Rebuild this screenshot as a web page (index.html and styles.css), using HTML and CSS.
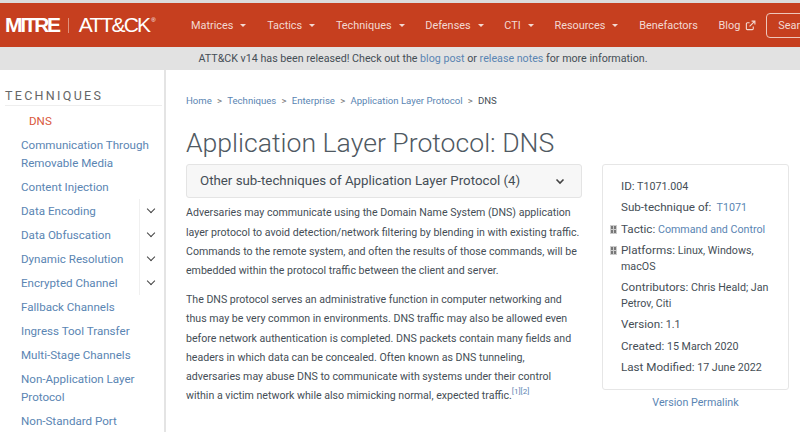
FILE: index.html
```html
<!DOCTYPE html>
<html lang="en">
  <head>
    <meta charset="UTF-8" />
    <title>Application Layer Protocol: DNS</title>
    <link rel="stylesheet" href="styles.css">
  </head>
  <body>
    <header class="navbar">
      <div class="logo"><span class="logo-mitre">MITRE</span><span class="logo-bar"></span><span class="logo-attack">ATT&amp;CK<sup>®</sup></span></div>
      <nav class="nav-links">
        <a class="nav-link caret">Matrices</a>
        <a class="nav-link caret">Tactics</a>
        <a class="nav-link caret">Techniques</a>
        <a class="nav-link caret">Defenses</a>
        <a class="nav-link caret">CTI</a>
        <a class="nav-link caret">Resources</a>
        <a class="nav-link">Benefactors</a>
        <a class="nav-link">Blog
          <svg class="ext-icon" viewBox="0 0 12 12" fill="none" stroke="currentColor" stroke-width="1.2">
            <path d="M9 7v2.500a1 1 0 0 1-1 1H2.500a1 1 0 0 1-1-1V4a1 1 0 0 1 1-1H5" />
            <path d="M5 7l5.500-5.500M7.200 1.200h3.600v3.600" />
          </svg>
        </a>
      </nav>
      <button class="search-btn">Search</button>
    </header>
    <div class="banner">
      ATT&amp;CK v14 has been released! Check out the <a>blog post</a> or <a>release notes</a> for more information.
    </div>
    <div class="page">
      <aside class="sidebar">
        <h5 class="side-title">TECHNIQUES</h5>
        <ul class="side-list">
          <li class="side-item active">DNS</li>
          <li class="side-item">Communication Through Removable Media</li>
          <li class="side-item">Content Injection</li>
          <li class="side-item expand">Data Encoding</li>
          <li class="side-item expand">Data Obfuscation</li>
          <li class="side-item expand">Dynamic Resolution</li>
          <li class="side-item expand">Encrypted Channel</li>
          <li class="side-item">Fallback Channels</li>
          <li class="side-item">Ingress Tool Transfer</li>
          <li class="side-item">Multi-Stage Channels</li>
          <li class="side-item">Non-Application Layer Protocol</li>
          <li class="side-item">Non-Standard Port</li>
        </ul>
      </aside>
      <main class="content">
        <ol class="crumbs">
          <li><a>Home</a></li>
          <li><a>Techniques</a></li>
          <li><a>Enterprise</a></li>
          <li><a>Application Layer Protocol</a></li>
          <li>DNS</li>
        </ol>
        <h1 class="title">Application Layer Protocol: DNS</h1>
        <div class="columns">
          <div class="description">
            <div class="subs-card">
              <span>Other sub-techniques of Application Layer Protocol (4)</span>
              <svg class="chev" viewBox="0 0 12 12" fill="none" stroke="currentColor" stroke-width="1.6"><path d="M2.500 4.500L6 8l3.500-3.500" /></svg>
            </div>
            <p>Adversaries may communicate using the Domain Name System (DNS) application layer protocol to avoid detection/network filtering by blending in with existing traffic. Commands to the remote system, and often the results of those commands, will be embedded within the protocol traffic between the client and server.</p>
            <p>The DNS protocol serves an administrative function in computer networking and thus may be very common in environments. DNS traffic may also be allowed even before network authentication is completed. DNS packets contain many fields and headers in which data can be concealed. Often known as DNS tunneling, adversaries may abuse DNS to communicate with systems under their control within a victim network while also mimicking normal, expected traffic.<sup><a>[1]</a><a>[2]</a></sup></p>
          </div>
          <div class="side-info">
            <div class="info-card">
              <div class="info-row"><b>ID:</b> T1071.004</div>
              <div class="info-row"><b>Sub-technique of:</b>&nbsp; <a>T1071</a></div>
              <div class="info-row"><span class="tofu"></span><b>Tactic:</b> <a>Command and Control</a></div>
              <div class="info-row"><span class="tofu"></span><b>Platforms:</b> Linux, Windows, macOS</div>
              <div class="info-row"><b>Contributors:</b> Chris Heald; Jan Petrov, Citi</div>
              <div class="info-row"><b>Version:</b> 1.1</div>
              <div class="info-row"><b>Created:</b> 15 March 2020</div>
              <div class="info-row"><b>Last Modified:</b> 17 June 2022</div>
            </div>
            <a class="permalink">Version Permalink</a>
          </div>
        </div>
      </main>
    </div>
  </body>
</html>
```

FILE: styles.css
```css
:root {
  --red: #c63f1f;
  --link: #5a85b3;
  --text: #454e56;
}
*,
*::before,
*::after {
  box-sizing: border-box;
}
html,
body {
  height: 432px;
  overflow: hidden;
}
body {
  margin: 0;
  font-family: Roboto, "Liberation Sans", sans-serif;
  color: var(--text);
  background: #fff;
}
a {
  color: var(--link);
}

.navbar {
  display: flex;
  align-items: center;
  height: 47px;
  padding-left: 5px;
  border-top: 3px solid #dcdcdc;
  background: var(--red);
  overflow: hidden;
  white-space: nowrap;
}
.logo {
  display: flex;
  align-items: center;
  flex: none;
  width: 186px;
  font-family: "Liberation Sans", sans-serif;
  font-size: 21px;
  color: #fff;
}
.logo-mitre {
  font-weight: bold;
  letter-spacing: -2.300px;
}
.logo-bar {
  width: 1px;
  height: 15px;
  margin: 0 10px 0 9px;
  background: #e0917d;
}
.logo-attack {
  letter-spacing: -1.800px;
}
.logo-attack sup {
  margin-left: 2px;
  font-size: 6px;
  line-height: 0;
  vertical-align: 10px;
}
.nav-links {
  display: flex;
  flex: none;
  gap: 20.700px;
  font-size: 10.900px;
}
.nav-link {
  display: flex;
  align-items: center;
  color: #f3d9d2;
}
.caret::after {
  content: "";
  margin-left: 7px;
  border-top: 3px solid currentColor;
  border-left: 3px solid transparent;
  border-right: 3px solid transparent;
}
.ext-icon {
  width: 11px;
  height: 11px;
  margin-left: 5px;
}
.search-btn {
  flex: none;
  width: 70px;
  height: 25px;
  margin-left: 10px;
  padding: 0 0 0 11px;
  border: 1px solid #eec6bb;
  border-radius: 4px;
  background: transparent;
  color: #f3d9d2;
  font: 10.900px Roboto, sans-serif;
  text-align: left;
}

.banner {
  height: 23px;
  padding-left: 46px;
  line-height: 23px;
  background: #e2e2e2;
  text-align: center;
  font-size: 10.700px;
}

.page {
  display: flex;
  height: 362px;
}
.sidebar {
  flex: none;
  width: 166px;
  padding: 0 2px 0 5px;
  border-right: 2px solid #e4e4e4;
}
.side-title {
  margin: 18px 0 0;
  padding-bottom: 2px;
  border-bottom: 1px solid #eee;
  font-size: 12.500px;
  font-weight: 400;
  letter-spacing: 2.300px;
  line-height: 15px;
  color: #666;
}
.side-list {
  list-style: none;
  margin: 3px 0 0;
  padding: 0;
}
.side-item {
  position: relative;
  padding: 3px 8px 3px 16px;
  font-size: 11.600px;
  line-height: 18px;
  color: var(--link);
}
.side-item.active {
  padding-left: 24px;
  color: #d9583c;
}
.side-item.expand::after {
  content: "";
  position: absolute;
  right: 8px;
  top: 7px;
  width: 6px;
  height: 6px;
  border-right: 1.500px solid #444;
  border-bottom: 1.500px solid #444;
  transform: rotate(45deg);
}
.side-item.expand::before {
  content: "";
  position: absolute;
  right: 22px;
  top: 0;
  bottom: 0;
  border-left: 1px solid #f0f0f0;
}

.content {
  flex: 1;
  padding: 0 11px 0 20px;
}
.crumbs {
  display: flex;
  list-style: none;
  margin: 24px 0 0;
  padding: 0;
  font-size: 9.600px;
  line-height: 14px;
}
.crumbs li + li::before {
  content: ">";
  padding: 0 5.200px;
  color: #777;
}
.title {
  margin: 19px 0 0;
  font-size: 26.600px;
  font-weight: 300;
  line-height: 32px;
  color: #4f5962;
}
.columns {
  display: flex;
  align-items: flex-start;
  gap: 20px;
  margin-top: 5px;
}
.description {
  flex: none;
  width: 396px;
  font-size: 10.600px;
  line-height: 19.200px;
}
.description p {
  width: 395px;
  margin: 0 0 10px;
}
.description sup {
  font-size: 8px;
  line-height: 0;
}
.subs-card {
  display: flex;
  align-items: center;
  justify-content: space-between;
  height: 34px;
  margin-bottom: 5.400px;
  padding: 0 15px 0 13px;
  border: 1px solid #e4e4e4;
  border-radius: 3px;
  background: #f7f7f7;
  font-size: 13.300px;
}
.chev {
  width: 12px;
  height: 12px;
  color: #444;
}

.side-info {
  flex: none;
  width: 187px;
  text-align: center;
}
.info-card {
  padding: 13px 12px 9px 18px;
  border: 1px solid #e6e6e6;
  border-radius: 3px;
  text-align: left;
  font-size: 10.700px;
  line-height: 16px;
}
.info-row {
  position: relative;
  margin-bottom: 4.300px;
}
.info-row b {
  font-size: 11.650px;
  font-weight: 400;
}
.tofu {
  position: absolute;
  left: -11px;
  top: 4px;
  width: 7px;
  height: 9px;
  background:
    linear-gradient(#777, #777) 1px 1px / 2px 3px no-repeat,
    linear-gradient(#777, #777) 4px 1px / 2px 3px no-repeat,
    linear-gradient(#777, #777) 1px 5px / 2px 3px no-repeat,
    linear-gradient(#777, #777) 4px 5px / 2px 3px no-repeat,
    #ccc;
}
.permalink {
  display: block;
  margin-top: 6px;
  font-size: 10.700px;
  line-height: 14px;
}
```
